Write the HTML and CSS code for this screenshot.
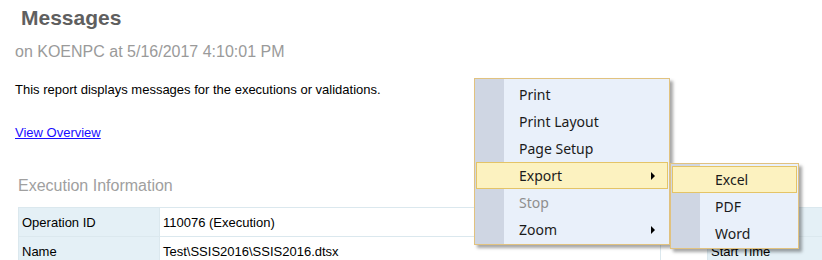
FILE: index.html
```html
<!DOCTYPE html>
<html lang="en">

<head>
  <meta charset="UTF-8">
  <title>Messages</title>
  <link rel="stylesheet" href="styles.css">
</head>

<body>
  <div class="report">
    <h1 class="title">Messages</h1>
    <p class="subtitle">on KOENPC at 5/16/2017 4:10:01 PM</p>
    <p class="desc">This report displays messages for the executions or validations.</p>
    <a class="link" href="#">View Overview</a>
    <h2 class="section">Execution Information</h2>
    <table class="info">
      <tr>
        <td class="label">Operation ID</td>
        <td class="value">110076 (Execution)</td>
        <td class="gap"></td>
        <td class="label"></td>
        <td class="value"></td>
      </tr>
      <tr>
        <td class="label">Name</td>
        <td class="value">Test\SSIS2016\SSIS2016.dtsx</td>
        <td class="gap"></td>
        <td class="label">Start Time</td>
        <td class="value"></td>
      </tr>
    </table>
  </div>

  <!-- context menu -->
  <div class="menu main-menu">
    <div class="item">Print</div>
    <div class="item">Print Layout</div>
    <div class="item">Page Setup</div>
    <div class="item active">Export <i class="arrow"></i></div>
    <div class="item disabled">Stop</div>
    <div class="item">Zoom <i class="arrow"></i></div>
  </div>

  <div class="menu sub-menu">
    <div class="item active">Excel</div>
    <div class="item">PDF</div>
    <div class="item">Word</div>
  </div>
</body>

</html>
```

FILE: styles.css
```css
html,
body {
  overflow: hidden;
}

body {
  margin: 0;
  background: #fff;
  font-family: "Liberation Sans", Arial, sans-serif;
  color: #000;
}

.report {
  padding: 6px 0 0 15px;
}

.title {
  margin: 0;
  padding-left: 6px;
  font-size: 21px;
  line-height: 24px;
  font-weight: bold;
  color: #5f5f5f;
}

.subtitle {
  margin: 12px 0 0;
  font-size: 16px;
  line-height: 20px;
  color: #9a9a9a;
}

.desc {
  margin: 20px 0 0;
  font-size: 13px;
  line-height: 16px;
}

.link {
  display: block;
  margin-top: 27px;
  width: max-content;
  font-size: 13px;
  line-height: 16px;
  color: #1a0dff;
}

.section {
  margin: 35px 0 0;
  padding-left: 3px;
  font-size: 16px;
  line-height: 20px;
  font-weight: normal;
  color: #a0a0a0;
}

.info {
  margin: 11px 0 0 3px;
  border-collapse: collapse;
  table-layout: fixed;
  width: 830px;
  font-size: 13px;
}

.info td {
  height: 28px;
  padding: 0 3px;
  border: 1px solid #dbe8ee;
  white-space: nowrap;
}

.info td:nth-child(1) {
  width: 134px;
}

.info td:nth-child(2) {
  width: 494px;
}

.info td:nth-child(3) {
  width: 40px;
}

.info td:nth-child(4) {
  width: 120px;
}

.info .label {
  background: #e4f0f6;
}

/* menus */
.menu {
  position: absolute;
  box-sizing: border-box;
  border: 1px solid #e1c27f;
  padding: 2px 1px;
  background: linear-gradient(to right, #cfd6e3 29px, #e9f0fa 29px);
  box-shadow: 3px 3px 3px rgba(0, 0, 0, 0.35);
  font-family: "Noto Sans", "Open Sans", sans-serif;
  font-size: 14px;
  color: #1b1b1b;
}

.main-menu {
  left: 474px;
  top: 78px;
  width: 196px;
  height: 167px;
}

.sub-menu {
  left: 670px;
  top: 163px;
  width: 129px;
  height: 86px;
}

.menu .item {
  position: relative;
  height: 27px;
  line-height: 25px;
  padding-left: 42px;
  border: 1px solid transparent;
  box-sizing: border-box;
}

.menu .item.active {
  background: #fcf2c0;
  border-color: #e4c467;
}

.menu .item.disabled {
  color: #8e8e8e;
}

.arrow {
  position: absolute;
  right: 12px;
  top: 9px;
  width: 0;
  height: 0;
  border-top: 4px solid transparent;
  border-bottom: 4px solid transparent;
  border-left: 4px solid #000;
}
```
